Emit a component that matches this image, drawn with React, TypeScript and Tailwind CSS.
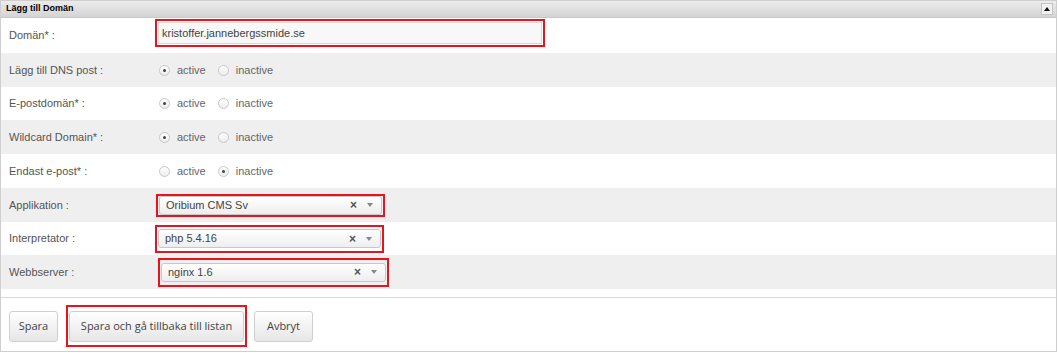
import React from 'react';

const rows = [
  { label: 'Lägg till DNS post :', active: true, h: 'h-[34px]', bg: 'bg-[#efefef]' },
  { label: 'E-postdomän* :', active: true, h: 'h-[33px]', bg: 'bg-white' },
  { label: 'Wildcard Domain* :', active: true, h: 'h-[34px]', bg: 'bg-[#efefef]' },
  { label: 'Endast e-post* :', active: false, h: 'h-[34px]', bg: 'bg-white' },
];

function Radio({ checked }: { checked: boolean }) {
  return (
    <span className="w-[11px] h-[11px] rounded-full border border-[#c8c8c8] bg-gradient-to-b from-white to-[#ececec] flex items-center justify-center">
      {checked && <span className="w-[3px] h-[3px] rounded-full bg-[#444]" />}
    </span>
  );
}

function Select({ value, box }: { value: string; box: string }) {
  return (
    <div className={`border-2 border-[#e8141b] p-px flex items-center ${box}`}>
      <div className="w-full h-[19px] rounded-[3px] border border-[#c8c8c8] bg-gradient-to-b from-white to-[#eeeeee] flex items-center pl-[6px] pr-[8px] text-[11px] text-[#444]">
        <span className="flex-1">{value}</span>
        <span className="text-[#555] text-[12px] font-bold mr-[10px] leading-none">×</span>
        <span className="w-0 h-0 border-l-[3px] border-r-[3px] border-t-[4px] border-l-transparent border-r-transparent border-t-[#888]" />
      </div>
    </div>
  );
}

export default function App() {
  return (
    <div className="w-[1058px] h-[353px] bg-white font-['Liberation_Sans',Arial,sans-serif]">
      <div className="w-[1057px] h-[352px] border border-[#cfcfcf] flex flex-col">
        <div className="h-[17px] bg-gradient-to-b from-[#ececec] to-[#d4d4d4] border-b border-[#c8c8c8] flex items-center justify-between pl-[5px] pr-[3px]">
          <span className="text-[9px] font-bold text-[#000]">Lägg till Domän</span>
          <span className="w-[12px] h-[12px] border border-[#c4c4c4] bg-[#f2f2f2] flex items-center justify-center">
            <span className="w-0 h-0 border-l-[3px] border-r-[3px] border-b-[4px] border-l-transparent border-r-transparent border-b-[#111]" />
          </span>
        </div>

        <div className="h-[35px] bg-white flex items-center text-[11px] text-[#555]">
          <span className="w-[154px] pl-[8px]">Domän* :</span>
          <div className="border-2 border-[#e8141b] p-px w-[390px] -mt-[5px]">
            <div className="h-[22px] border border-[#d9d9d9] bg-[#f8f8f8] flex items-center pl-[3px] text-[11px] text-[#444]">
              kristoffer.jannebergssmide.se
            </div>
          </div>
        </div>

        {rows.map((r) => (
          <div key={r.label} className={`${r.h} ${r.bg} flex items-center text-[11px] text-[#666]`}>
            <span className="w-[158px] pl-[8px] text-[#555]">{r.label}</span>
            <div className="flex items-center gap-[7px]">
              <Radio checked={r.active} />
              <span>active</span>
            </div>
            <div className="flex items-center gap-[7px] ml-[12px]">
              <Radio checked={!r.active} />
              <span>inactive</span>
            </div>
          </div>
        ))}

        <div className="h-[34px] bg-[#efefef] flex items-center text-[11px] text-[#555]">
          <span className="w-[155px] pl-[8px]">Applikation :</span>
          <Select value="Oribium CMS Sv" box="w-[229px] h-[23px]" />
        </div>
        <div className="h-[33px] bg-white flex items-center text-[11px] text-[#555]">
          <span className="w-[154px] pl-[8px]">Interpretator :</span>
          <Select value="php 5.4.16" box="w-[229px] h-[28px]" />
        </div>
        <div className="h-[34px] bg-[#efefef] flex items-center text-[11px] text-[#555]">
          <span className="w-[157px] pl-[8px]">Webbserver :</span>
          <Select value="nginx 1.6" box="w-[231px] h-[29px]" />
        </div>

        <div className="h-[9px] bg-white border-b border-[#d8d8d8]" />

        <div className="flex items-center pl-[8px] pt-[7px] font-['Open_Sans',sans-serif] text-[11px] text-[#444]">
          <button className="h-[31px] w-[49px] rounded-[3px] border border-[#cfcfcf] bg-gradient-to-b from-white to-[#e6e6e6]">
            Spara
          </button>
          <div className="ml-[8px] border-2 border-[#e8141b] p-px h-[42px] flex items-center">
            <button className="h-[31px] w-[175px] rounded-[3px] border border-[#cfcfcf] bg-gradient-to-b from-white to-[#e6e6e6]">
              Spara och gå tillbaka till listan
            </button>
          </div>
          <button className="ml-[7px] h-[31px] w-[59px] rounded-[3px] border border-[#cfcfcf] bg-gradient-to-b from-white to-[#e6e6e6]">
            Avbryt
          </button>
        </div>
      </div>
    </div>
  );
}
